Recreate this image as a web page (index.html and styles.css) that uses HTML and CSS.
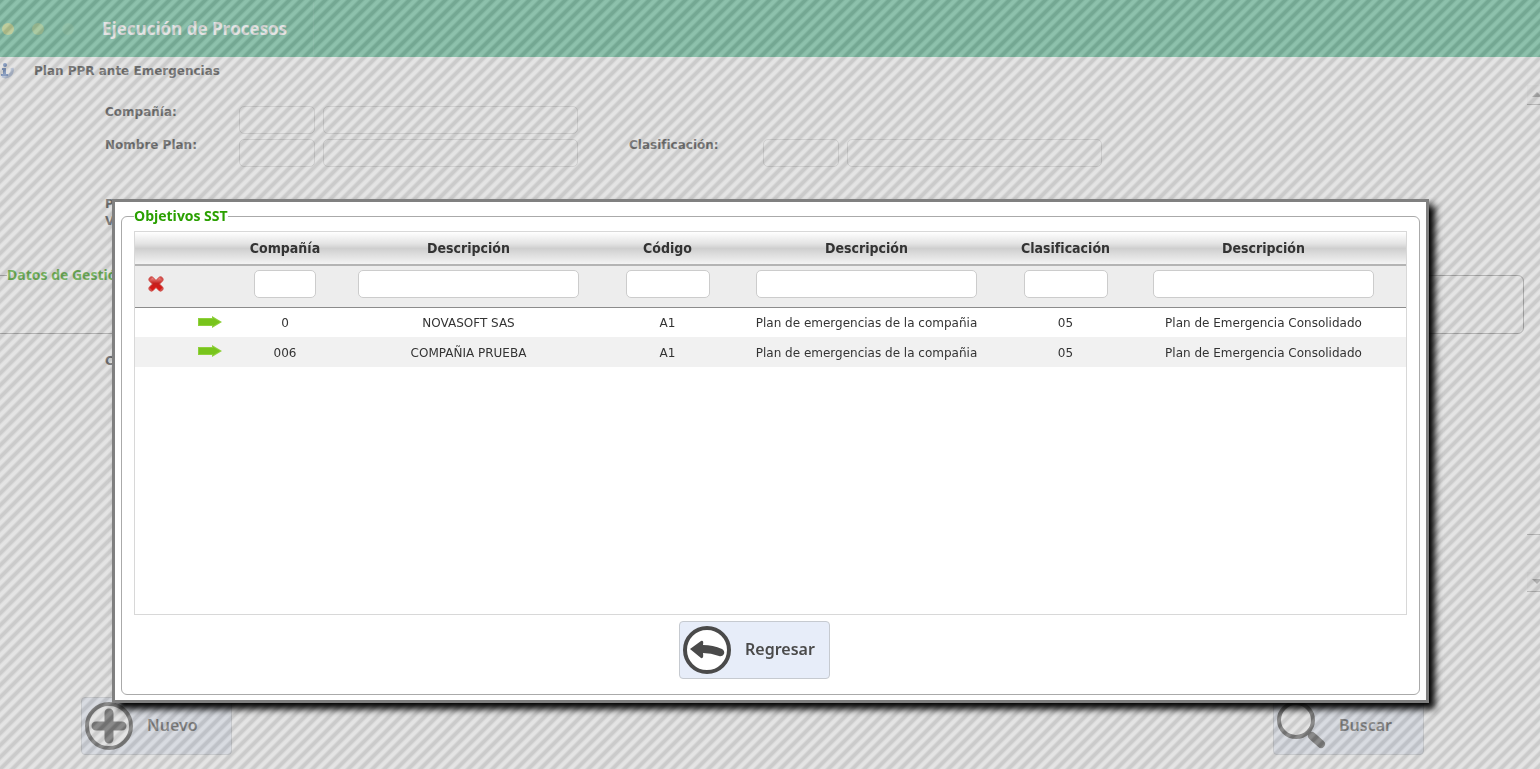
FILE: index.html
```
<!DOCTYPE html>
<html lang="es">
<head>
    <meta charset="utf-8">
    <title>Ejecución de Procesos</title>
    <link rel="stylesheet" href="styles.css">
</head>
<body>
    <div class="page">
        <header class="topbar">
            <div class="dots"><span class="dot"></span><span class="dot dim"></span><span class="dot off"></span></div>
            <h1>Ejecución de Procesos</h1>
        </header>

        <div class="title-row">
            <svg class="info" width="14" height="16" viewBox="0 0 14 16">
                <path d="M12 5a7 7 0 0 1-10 8" fill="none" stroke="#a9bde0" stroke-width="3"/>
                <path d="M2 5h4v6h2v2H1v-2h2V7H2z" fill="#4c74b8"/>
                <circle cx="5" cy="2" r="2" fill="#4c74b8"/>
            </svg>
            <h2>Plan PPR ante Emergencias</h2>
        </div>

        <div class="content">
            <form class="form">
                <div class="form-row">
                    <label for="cia">Compañía:</label>
                    <input type="text" id="cia" class="short">
                    <input type="text" class="long" aria-label="Nombre compañía">
                </div>
                <div class="form-row">
                    <label for="plan">Nombre Plan:</label>
                    <input type="text" id="plan" class="short">
                    <input type="text" class="long" aria-label="Descripción plan">
                    <label for="clasif" class="second">Clasificación:</label>
                    <input type="text" id="clasif" class="short">
                    <input type="text" class="long" aria-label="Descripción clasificación">
                </div>
                <p class="period">P<br>V</p>
                <fieldset class="gestion">
                    <legend>Datos de Gestión</legend>
                </fieldset>
                <p class="code">C</p>
            </form>
            <div class="scroll">
                <span class="scroll-btn up"></span>
                <span class="scroll-track"></span>
                <span class="scroll-btn down"></span>
            </div>
        </div>

        <footer class="actions">
            <button type="button" class="button">
                <svg width="50" height="50" viewBox="0 0 50 50">
                    <circle cx="25" cy="25" r="22" fill="#fff" stroke="#4a4a4a" stroke-width="4"/>
                    <path d="M25 12v26M12 25h26" stroke="#4a4a4a" stroke-width="9" stroke-linecap="round"/>
                </svg>
                <span>Nuevo</span>
            </button>
            <button type="button" class="button">
                <svg width="50" height="50" viewBox="0 0 50 50">
                    <circle cx="20" cy="19" r="17" fill="#fff" stroke="#4a4a4a" stroke-width="4"/>
                    <path d="M32 31l4 4" stroke="#4a4a4a" stroke-width="5"/>
                    <path d="M36 35l9 8" stroke="#4a4a4a" stroke-width="8" stroke-linecap="round"/>
                </svg>
                <span>Buscar</span>
            </button>
        </footer>
    </div>

    <div class="overlay"></div>

    <div class="modal" role="dialog">
        <fieldset class="panel">
            <legend>Objetivos SST</legend>
            <div class="grid">
                <table>
                    <colgroup>
                        <col class="col-icon"><col class="col-icon"><col class="col-cia">
                        <col class="col-desc"><col class="col-code">
                        <col class="col-desc"><col class="col-code">
                        <col class="col-last">
                    </colgroup>
                    <thead>
                        <tr class="head">
                            <th></th>
                            <th></th>
                            <th>Compañía</th>
                            <th>Descripción</th>
                            <th>Código</th>
                            <th>Descripción</th>
                            <th>Clasificación</th>
                            <th>Descripción</th>
                        </tr>
                        <tr class="filters">
                            <td>
                                <button type="button" class="icon-button" aria-label="Limpiar filtros">
                                    <svg width="16" height="16" viewBox="0 0 16 16">
                                        <defs>
                                            <linearGradient id="red" x1="0" y1="0" x2="0" y2="1">
                                                <stop offset="0" stop-color="#ee8c88"/>
                                                <stop offset=".45" stop-color="#c4201d"/>
                                                <stop offset="1" stop-color="#e01512"/>
                                            </linearGradient>
                                        </defs>
                                        <path d="M3.500 3.500l9 9M12.500 3.500l-9 9" fill="none" stroke="#d0504c" stroke-width="6" stroke-linecap="round"/>
                                        <path d="M1.500 4.500l3-3L8 5l3.500-3.500 3 3L11 8l3.500 3.500-3 3L8 11l-3.500 3.500-3-3L5 8z" fill="url(#red)"/>
                                    </svg>
                                </button>
                            </td>
                            <td></td>
                            <td><input type="text" class="f-cia" aria-label="Compañía"></td>
                            <td><input type="text" class="f-desc" aria-label="Descripción compañía"></td>
                            <td><input type="text" class="f-code" aria-label="Código"></td>
                            <td><input type="text" class="f-desc" aria-label="Descripción plan"></td>
                            <td><input type="text" class="f-code" aria-label="Clasificación"></td>
                            <td><input type="text" class="f-desc" aria-label="Descripción clasificación"></td>
                        </tr>
                    </thead>
                    <tbody>
                        <tr>
                            <td></td>
                            <td class="select">
                                <button type="button" class="icon-button" aria-label="Seleccionar">
                                    <svg width="24" height="14" viewBox="0 0 24 14">
                                        <path d="M0 3h14V1l10 6-10 6v-2H0z" fill="#8fd03c"/>
                                        <path d="M1 4h14V3l7 4-7 4v-1H1z" fill="#78c41c"/>
                                    </svg>
                                </button>
                            </td>
                            <td>0</td>
                            <td>NOVASOFT SAS</td>
                            <td>A1</td>
                            <td>Plan de emergencias de la compañia</td>
                            <td>05</td>
                            <td>Plan de Emergencia Consolidado</td>
                        </tr>
                        <tr>
                            <td></td>
                            <td class="select">
                                <button type="button" class="icon-button" aria-label="Seleccionar">
                                    <svg width="24" height="14" viewBox="0 0 24 14">
                                        <path d="M0 3h14V1l10 6-10 6v-2H0z" fill="#8fd03c"/>
                                        <path d="M1 4h14V3l7 4-7 4v-1H1z" fill="#78c41c"/>
                                    </svg>
                                </button>
                            </td>
                            <td>006</td>
                            <td>COMPAÑIA PRUEBA</td>
                            <td>A1</td>
                            <td>Plan de emergencias de la compañia</td>
                            <td>05</td>
                            <td>Plan de Emergencia Consolidado</td>
                        </tr>
                    </tbody>
                </table>
            </div>
            <div class="panel-actions">
                <button type="button" class="button">
                    <svg width="50" height="50" viewBox="0 0 50 50">
                        <circle cx="25" cy="25" r="22" fill="#fff" stroke="#4a4a4a" stroke-width="4"/>
                        <path d="M8 24L19 16q3-1 2 4 10 0 19 4 3 2 2 5-2 3-5 2-8-3-16-3 1 6-2 5z" fill="#4a4a4a"/>
                    </svg>
                    <span>Regresar</span>
                </button>
            </div>
        </fieldset>
    </div>
</body>
</html>
```
FILE: styles.css
```
* {
    box-sizing: border-box;
}

body {
    margin: 0;
    overflow: hidden;
    background: #fff;
    color: #333;
    font-family: "DejaVu Sans", Verdana, sans-serif;
    font-size: 12px;
}

h1, h2, p {
    margin: 0;
}

.page {
    height: 100vh;
    overflow: hidden;
}

/* cabecera */
.topbar {
    display: flex;
    align-items: center;
    height: 57px;
    background: #50b98f;
    color: #fff;
}

.topbar h1 {
    padding-right: 26px;
    border-right: 1px solid #5cbd96;
    font-family: "Open Sans", sans-serif;
    font-size: 17px;
    line-height: 53px;
}

.dots {
    display: flex;
    gap: 18px;
    width: 102px;
    padding-left: 2px;
}

.dot {
    width: 12px;
    height: 12px;
    border-radius: 50%;
    background: #b4d070;
}

.dot.dim {
    background: #8cca7c;
}

.dot.off {
    background: #5cbc8c;
}

.title-row {
    display: flex;
    align-items: center;
    gap: 20px;
    height: 28px;
}

.title-row h2 {
    font-size: 12px;
}

.content {
    display: flex;
    height: 612px;
}

.form {
    flex: 1;
    padding-top: 21px;
    font-weight: bold;
}

.form-row {
    display: flex;
    padding-left: 105px;
    margin-bottom: 5px;
}

.form-row label {
    width: 134px;
    line-height: 12px;
}

.form-row label.second {
    margin-left: 51px;
}

input {
    height: 28px;
    border: 1px solid #ccc;
    border-radius: 5px;
    background: #fff;
}

.short {
    width: 76px;
    margin-right: 8px;
}

.long {
    width: 255px;
}

.form-row input {
    border-color: #d4d4d4;
}

.period {
    padding: 24px 0 0 105px;
    line-height: 17px;
}

.gestion {
    height: 68px;
    margin: 36px 3px 0 -10px;
    padding: 0 16px;
    border: 1px solid #999;
    border-radius: 6px;
}

.gestion legend {
    padding: 0;
    color: #2aa000;
    font-family: "Noto Sans", sans-serif;
    font-size: 14px;
    line-height: 18px;
}

.code {
    padding: 20px 0 0 105px;
}

.scroll {
    display: flex;
    flex-direction: column;
    width: 13px;
    height: 507px;
}

.scroll-btn {
    height: 20px;
    border-bottom: 1px solid #aaa;
    background: #f4f4f4;
}

.scroll-btn::before {
    content: "";
    display: block;
    margin: 7px 0 0 5px;
    border: 5px solid transparent;
}

.up::before {
    margin-top: 2px;
    border-bottom-color: #999;
}

.down::before {
    border-top-color: #999;
}

.scroll-track {
    flex: 1;
    border-bottom: 1px solid #aaa;
    margin-bottom: 37px;
}

.actions {
    display: flex;
    justify-content: space-between;
    padding: 0 116px 0 81px;
}

.button {
    display: flex;
    align-items: center;
    gap: 13px;
    width: 151px;
    height: 58px;
    padding: 0 2px;
    border: 1px solid #c6cad0;
    border-radius: 4px;
    background: #e7edf9;
    color: #4a4a4a;
    font-family: "Noto Sans", sans-serif;
    font-size: 16px;
    font-weight: 600;
}

.button span {
    padding-bottom: 3px;
}

/* capa rayada sobre la pagina */
.overlay {
    position: fixed;
    inset: 0;
    background: repeating-linear-gradient(135deg, #979797 0%, #979797 6%, #c9c9c9 12%, #c9c9c9 19%, #979797 25%);
    background-size: 24px 24px;
    opacity: .5;
}

/* ventana */
.modal {
    position: absolute;
    top: 199px;
    left: 112px;
    right: 111px;
    padding: 5px 6px;
    border: 3px solid #808080;
    background: #fff;
    box-shadow: 6px 6px 7px #000;
}

.panel {
    margin: 0;
    padding: 6px 12px 15px;
    border: 1px solid #aaa;
    border-radius: 6px;
}

.panel legend {
    padding: 0;
    color: #2aa000;
    font-family: "Open Sans", sans-serif;
    font-size: 14px;
    font-weight: bold;
    line-height: 18px;
}

.grid {
    height: 384px;
    border: 1px solid #d8d8d8;
}

table {
    width: 100%;
    table-layout: fixed;
    border-collapse: collapse;
}

.col-icon { width: 50px; }
.col-cia { width: 100px; }
.col-desc { width: 267px; }
.col-code { width: 131px; }
.col-last { width: 275px; }

th, td {
    height: 30px;
    padding: 0;
    text-align: center;
}

tbody td {
    padding-top: 2px;
}

tbody .select {
    padding: 0 0 2px;
}

th:last-child, td:last-child {
    padding-right: 10px;
}

.head th {
    height: 33px;
    border-bottom: 2px solid #b4b4b4;
    font-family: "DejaVu Sans Condensed", Tahoma, sans-serif;
    font-size: 14px;
}

.head {
    background: linear-gradient(#fff, #e4e4e4 35%, #cfcfcf 50%, #f6f6f6);
}

.filters {
    background: #ededed;
}

.filters td {
    height: 42px;
    padding-bottom: 5px;
    border-bottom: 1px solid #8c8c8c;
}

.filters td:first-child {
    padding-right: 8px;
}

.f-cia { width: 62px; }
.f-code { width: 84px; }
.f-desc { width: 221px; }

tbody tr:nth-child(even) {
    background: #f1f1f1;
}

.icon-button {
    padding: 0;
    border: 0;
    background: none;
    vertical-align: middle;
}

.icon-button svg {
    display: block;
}

.panel-actions {
    display: flex;
    justify-content: center;
    padding: 6px 32px 0 0;
}
```
